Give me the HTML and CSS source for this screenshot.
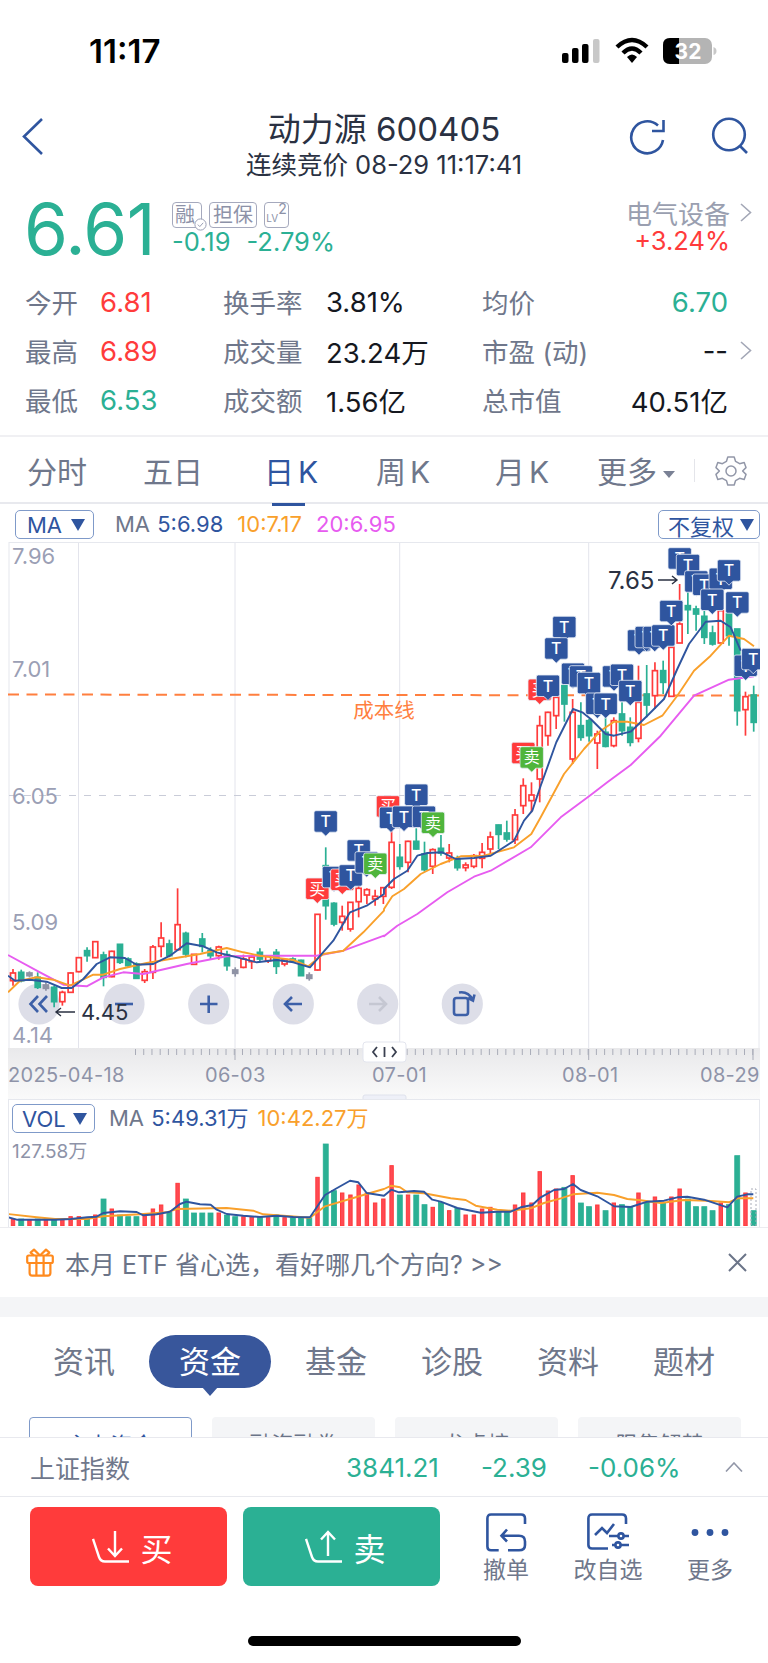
FILE: index.html
```html
<!DOCTYPE html>
<html lang="zh-CN">
<head>
  <meta charset="UTF-8" />
  <meta name="viewport" content="width=device-width, initial-scale=1" />
  <title>动力源 600405</title>
  <link rel="stylesheet" href="styles.css">
</head>
<body>

  <div class="status">
    <span class="time">11:17</span>
    <svg class="status-icons" width="155" height="28" viewBox="562 37 155 28">
      <rect x="562" y="53" width="6.5" height="10" rx="2" fill="#000"/>
      <rect x="572" y="48" width="6.5" height="15" rx="2" fill="#000"/>
      <rect x="582" y="44" width="6.5" height="19" rx="2" fill="#000"/>
      <rect x="593" y="39" width="6.5" height="24" rx="2" fill="#c8c8c8"/>
      <path d="M617 47 Q632 33 647 47" fill="none" stroke="#000" stroke-width="4.4"/>
      <path d="M623 53 Q632 44 641 53" fill="none" stroke="#000" stroke-width="4.4"/>
      <path d="M627 57 Q632 52 637 57 L632 63 Z" fill="#000"/>
      <rect x="663" y="38" width="49" height="26" rx="7" fill="#b4b4b4"/>
      <path d="M670 38 H679 V64 H670 Q663 64 663 57 V45 Q663 38 670 38 Z" fill="#000"/>
      <path d="M713.5 47 Q716.5 48 716.5 51 Q716.5 54 713.5 55 Z" fill="#c8c8c8"/>
      <text class="batt-text" x="688" y="59" text-anchor="middle">32</text>
    </svg>
  </div>

  <div class="nav">
    <svg class="nav-back" width="22" height="38" viewBox="0 0 22 38">
      <polyline points="20,2 2,19.5 20,37" fill="none" stroke="#2f559f" stroke-width="2.6"/>
    </svg>
    <div class="nav-title">
      <div class="nav-name">动力源 600405</div>
      <div class="nav-sub">连续竞价 08-29 11:17:41</div>
    </div>
    <svg class="nav-refresh" width="38" height="38" viewBox="628 117 38 38">
      <path d="M658 125.5 A 16 16 0 1 0 663 140" fill="none" stroke="#2f559f" stroke-width="2.6"/>
      <polyline points="663.5,120 663.5,131 652,131" fill="none" stroke="#2f559f" stroke-width="2.6"/>
    </svg>
    <svg class="nav-search" width="38" height="38" viewBox="711 117 38 38">
      <circle cx="729" cy="134.5" r="15.8" fill="none" stroke="#2f559f" stroke-width="2.6"/>
      <line x1="740" y1="146" x2="747" y2="153" stroke="#2f559f" stroke-width="2.6"/>
    </svg>
  </div>

  <div class="quote">
    <div class="price">6.61</div>
    <div class="quote-meta">
      <div class="badges">
        <span class="badge badge-rong">融
          <svg class="badge-check" width="13" height="13" viewBox="0 0 13 13">
            <circle cx="6.5" cy="6.5" r="5.6" fill="#fff" stroke="#9a9fb5"/>
            <polyline points="3.8,6.6 5.8,8.6 9.2,4.8" fill="none" stroke="#9a9fb5"/>
          </svg>
        </span>
        <span class="badge">担保</span>
        <span class="badge badge-lv"><small>LV</small><sup>2</sup></span>
      </div>
      <div class="changes"><span>-0.19</span><span>-2.79%</span></div>
    </div>
    <div class="sector">
      <div class="sector-name">电气设备
        <svg width="12" height="19" viewBox="0 0 12 19"><polyline points="1,1 10.5,9.5 1,18" fill="none" stroke="#a3a7b6" stroke-width="1.6"/></svg>
      </div>
      <div class="sector-pct">+3.24%</div>
    </div>
  </div>

  <div class="stats">
    <div class="stat"><span class="label l1">今开</span><span class="red">6.81</span></div>
    <div class="stat"><span class="label l2">换手率</span><span class="dark">3.81%</span></div>
    <div class="stat spread"><span class="label">均价</span><span class="green">6.70</span></div>
    <div></div>
    <div class="stat"><span class="label l1">最高</span><span class="red">6.89</span></div>
    <div class="stat"><span class="label l2">成交量</span><span class="dark">23.24万</span></div>
    <div class="stat spread"><span class="label">市盈 (动)</span><span class="dark">--</span></div>
    <svg class="stat-more" width="12" height="19" viewBox="0 0 12 19"><polyline points="1,1 10.5,9.5 1,18" fill="none" stroke="#a3a7b6" stroke-width="1.6"/></svg>
    <div class="stat"><span class="label l1">最低</span><span class="green">6.53</span></div>
    <div class="stat"><span class="label l2">成交额</span><span class="dark">1.56亿</span></div>
    <div class="stat spread"><span class="label">总市值</span><span class="dark">40.51亿</span></div>
    <div></div>
  </div>

  <div class="period-tabs">
    <span class="period p1">分时</span>
    <span class="period p2">五日</span>
    <span class="period p3 active">日<em>K</em></span>
    <span class="period p4">周<em>K</em></span>
    <span class="period p5">月<em>K</em></span>
    <span class="period p6">更多<i class="tri-small"></i></span>
    <span class="period-sep"></span>
    <svg class="gear" width="32" height="32" viewBox="0 0 32 32">
      <path d="M12.8 2 H19.2 L20.6 6.4 L24.6 8.7 L29.2 7.6 L31 12.6 L27.6 16 L31 19.4 L29.2 24.4 L24.6 23.3 L20.6 25.6 L19.2 30 H12.8 L11.4 25.6 L7.4 23.3 L2.8 24.4 L1 19.4 L4.4 16 L1 12.6 L2.8 7.6 L7.4 8.7 L11.4 6.4 Z" fill="none" stroke="#9297a8" stroke-width="1.5" stroke-linejoin="round"/>
      <circle cx="16" cy="16" r="5" fill="none" stroke="#9297a8" stroke-width="1.5"/>
    </svg>
  </div>

  <div class="ma-row">
    <span class="select select-ma">MA<i class="tri"></i></span>
    <span class="ma-text"><b class="grey">MA</b> <b class="blue">5:6.98</b><b class="orange">10:7.17</b><b class="pink">20:6.95</b></span>
    <span class="select select-fq">不复权<i class="tri"></i></span>
  </div>

  <div class="kline">
    <svg id="kline-chart" width="752" height="557" viewBox="8 543 752 557">
      <defs>
        <linearGradient id="axis-bg" x1="0" y1="0" x2="0" y2="1">
          <stop offset="0" stop-color="#e9e9eb"/>
          <stop offset="1" stop-color="#fafafa"/>
        </linearGradient>
      </defs>
      <rect x="9" y="543.5" width="750" height="506" fill="#fff" stroke="#e6e8ee"/>
      <g class="grid">
        <line x1="78.5" y1="544" x2="78.5" y2="1049"/>
        <line x1="235" y1="544" x2="235" y2="1049"/>
        <line x1="399.7" y1="544" x2="399.7" y2="1049"/>
        <line x1="588.7" y1="544" x2="588.7" y2="1049"/>
      </g>
      <line class="dash-grey" x1="9" y1="796.5" x2="759" y2="796.5"/>
      <line class="dash-cost" x1="8" y1="695.5" x2="759" y2="696.5"/>
      <text class="axis-label" x="12" y="565">7.96</text>
      <text class="axis-label" x="12" y="678">7.01</text>
      <text class="axis-label" x="12" y="805">6.05</text>
      <text class="axis-label" x="12" y="931">5.09</text>
      <text class="axis-label" x="12" y="1044">4.14</text>
      <text class="cost-label" x="384" y="719" text-anchor="middle">成本线</text>

      <g class="tools">
        <circle cx="39" cy="1005" r="20.6"/>
        <circle cx="124" cy="1005" r="20.6"/>
        <circle cx="208.7" cy="1005" r="20.6"/>
        <circle cx="293.3" cy="1005" r="20.6"/>
        <circle cx="377.7" cy="1005" r="20.6"/>
        <circle cx="462.3" cy="1005" r="20.6"/>
        <path d="M38 997 L30.5 1005 L38 1013 M47 997 L39.5 1005 L47 1013"/>
        <path d="M115 1005 H133"/>
        <path d="M200 1005 H217.5 M208.7 996.5 V1014"/>
        <path d="M302 1005 H285 M292 998 L285 1005 L292 1012"/>
        <path class="off" d="M369 1005 H386 M379 998 L386 1005 L379 1012"/>
        <rect x="454" y="999" width="14" height="17" rx="2.5"/>
        <path d="M459 993.5 Q468 992 473 1001 M474.5 995.5 L473 1001.5 L468 999"/>
      </g>

      <g id="candles"></g>
      <g id="ma-lines"></g>
      <g id="tags"></g>

      <text class="note" x="608" y="590">7.65</text>
      <path class="note-arrow" d="M658 581 H677 M672 577 L677 581 L672 585"/>
      <text class="note note-low" x="81" y="1021">4.45</text>
      <path class="note-arrow" d="M75 1013 H56 M61 1009 L56 1013 L61 1017"/>

      <rect x="8" y="1049" width="752" height="51" fill="url(#axis-bg)"/>
      <g id="ticks"></g>
      <text class="date" x="8" y="1083">2025-04-18</text>
      <text class="date" x="205" y="1083">06-03</text>
      <text class="date" x="372" y="1083">07-01</text>
      <text class="date" x="562" y="1083">08-01</text>
      <text class="date" x="700" y="1083">08-29</text>

      <rect class="handle" x="363" y="1043" width="43" height="20" rx="3"/>
      <path class="handle-mark" d="M377 1048 L373 1053 L377 1058 M392 1048 L396 1053 L392 1058 M384.5 1048 V1058"/>
      <rect class="handle-low" x="363" y="1096" width="43" height="6" rx="2"/>
    </svg>
  </div>

  <div class="vol">
    <div class="vol-head">
      <span class="select select-vol">VOL<i class="tri"></i></span>
      <span class="ma-text vol-text"><b class="grey">MA</b> <b class="blue">5:49.31万</b><b class="orange">10:42.27万</b></span>
    </div>
    <svg id="vol-chart" width="750" height="92" viewBox="9 1135 750 92">
      <text class="vol-max" x="12" y="1159">127.58万</text>
      <g id="vol-bars"></g>
      <g id="vol-lines"></g>
      <rect class="vol-live" x="751" y="1190" width="5" height="37"/>
    </svg>
  </div>

  <div class="banner">
    <svg class="gift" width="28" height="29" viewBox="0 0 28 29">
      <g fill="none" stroke="#ff8a1e" stroke-width="2.2" stroke-linejoin="round">
        <rect x="1.2" y="7.5" width="25.6" height="7.5" rx="1.5"/>
        <path d="M3.6 15 V25 Q3.6 27.6 6.2 27.6 H21.8 Q24.4 27.6 24.4 25 V15"/>
        <path d="M10.4 7.5 V27.6 M17.6 7.5 V27.6"/>
        <path d="M14 7.5 L8 1.6 L4.6 4.6 L8 7.5 M14 7.5 L20 1.6 L23.4 4.6 L20 7.5"/>
      </g>
    </svg>
    <span class="banner-text">本月 ETF 省心选，看好哪几个方向? &gt;&gt;</span>
    <svg class="banner-close" width="19" height="19" viewBox="0 0 19 19">
      <path d="M1 1 L18 18 M18 1 L1 18" stroke="#6b7488" stroke-width="2"/>
    </svg>
  </div>

  <div class="gap-band"></div>

  <div class="detail">
    <div class="detail-tabs">
      <span class="detail-tab">资讯</span>
      <span class="detail-tab active">资金</span>
      <span class="detail-tab">基金</span>
      <span class="detail-tab">诊股</span>
      <span class="detail-tab">资料</span>
      <span class="detail-tab">题材</span>
    </div>
    <div class="sub-tabs">
      <span class="sub-tab active">主力资金</span>
      <span class="sub-tab">融资融券</span>
      <span class="sub-tab">龙虎榜</span>
      <span class="sub-tab">限售解禁</span>
    </div>
  </div>

  <div class="index-bar">
    <span class="index-name">上证指数</span>
    <span class="index-val v1">3841.21</span>
    <span class="index-val v2">-2.39</span>
    <span class="index-val v3">-0.06%</span>
    <svg width="18" height="10" viewBox="0 0 18 10"><polyline points="1,9.5 9,1 17,9.5" fill="none" stroke="#9297a8" stroke-width="1.6"/></svg>
  </div>

  <div class="action-bar">
    <button class="trade buy">
      <svg width="38" height="34" viewBox="0 0 38 34">
        <path d="M1 9 L7 27 Q8.5 31.5 13 31.5 H37" fill="none" stroke="#fff" stroke-width="2.4"/>
        <path d="M23 1 V26 M16 18.5 L23 26 L30 18.5" fill="none" stroke="#fff" stroke-width="2.4"/>
      </svg>
      买
    </button>
    <button class="trade sell">
      <svg width="38" height="34" viewBox="0 0 38 34">
        <path d="M1 9 L7 27 Q8.5 31.5 13 31.5 H37" fill="none" stroke="#fff" stroke-width="2.4"/>
        <path d="M23 26 V2 M16 9.5 L23 2 L30 9.5" fill="none" stroke="#fff" stroke-width="2.4"/>
      </svg>
      卖
    </button>
    <div class="action">
      <svg width="44" height="40" viewBox="-2 0 44 40">
        <g fill="none" stroke="#2f559f" stroke-width="2.6">
          <path d="M12.7 37.3 H5 Q1.4 37.3 1.4 33.5 V5.5 Q1.4 1.5 5 1.5 H35 Q39 1.5 39 5.5 V11"/>
          <path d="M21 16.5 L15.5 22.8 L21 28.5 M15.5 22.8 H33 Q39 22.8 39 28.5 V32 Q39 37.3 33 37.3 H22"/>
        </g>
      </svg>
      <span>撤单</span>
    </div>
    <div class="action">
      <svg width="44" height="40" viewBox="-1 0 44 40">
        <g fill="none" stroke="#2f559f" stroke-width="2.6">
          <path d="M21 35.5 H5 Q1.4 35.5 1.4 32 V5.5 Q1.4 1.5 5 1.5 H35 Q39 1.5 39 5.5 V11"/>
          <path d="M8 22 L15 15 L20 20 L27 11"/>
          <path d="M22 23 H42 M25 32 H42"/>
          <circle cx="34" cy="23" r="2.6" fill="#fff"/>
          <circle cx="31" cy="32" r="2.6" fill="#fff"/>
        </g>
      </svg>
      <span>改自选</span>
    </div>
    <div class="action">
      <svg width="44" height="40" viewBox="0 0 44 40">
        <g fill="#2f559f">
          <circle cx="7" cy="19.5" r="3.4"/>
          <circle cx="22" cy="19.5" r="3.4"/>
          <circle cx="37" cy="19.5" r="3.4"/>
        </g>
      </svg>
      <span>更多</span>
    </div>
  </div>

  <div class="home"><span class="home-bar"></span></div>

  <script src="chart.js"></script>
</body>
</html>
```

FILE: styles.css
```css
* {
  box-sizing: border-box;
}

html, body {
  margin: 0;
  padding: 0;
}

body {
  width: 768px;
  height: 1663px;
  overflow: hidden;
  background: #fff;
  font-family: Inter, "Noto Sans CJK SC", sans-serif;
  color: #2a3142;
}

svg {
  display: block;
}

/* status bar */
.status {
  height: 102px;
  display: flex;
  align-items: center;
  padding: 0 51px 0 89px;
  justify-content: space-between;
}

.time {
  font-size: 33px;
  font-weight: 600;
  color: #000;
}

.batt-text {
  font-family: Inter, sans-serif;
  font-size: 21px;
  font-weight: 700;
  fill: #fff;
}

/* nav */
.nav {
  height: 78px;
  position: relative;
  text-align: center;
  padding-top: 9px;
}

.nav-name {
  font-size: 33px;
  line-height: 36px;
  color: #2a3142;
}

.nav-sub {
  font-size: 25.5px;
  line-height: 28px;
  margin-top: 4px;
  color: #2a3142;
}

.nav-back,
.nav-refresh,
.nav-search {
  position: absolute;
  top: 15px;
}

.nav-back { left: 22px; }
.nav-refresh { left: 628px; }
.nav-search { left: 711px; }

/* quote */
.quote {
  height: 97px;
  display: flex;
  padding: 16px 16px 0 24px;
}

.price {
  width: 148px;
  font-size: 71px;
  line-height: 66px;
  letter-spacing: -0.5px;
  color: #2bb094;
}

.quote-meta {
  padding-top: 6px;
}

.badges {
  display: flex;
  gap: 7px;
}

.badge {
  position: relative;
  height: 26px;
  line-height: 24px;
  padding: 0 3px;
  border: 1px solid #a5a9bd;
  border-radius: 4px;
  font-size: 20px;
  color: #8d92a8;
}

.badge-rong {
  width: 30px;
  padding: 0 2px;
}

.badge-check {
  position: absolute;
  right: -6px;
  bottom: -4px;
}

.badge-lv {
  width: 25px;
  padding: 0;
  text-align: center;
  white-space: nowrap;
}

.badge-lv small {
  font-size: 10px;
}

.badge-lv sup {
  font-size: 14px;
  line-height: 0;
}

.changes {
  display: flex;
  gap: 16px;
  font-size: 25.5px;
  line-height: 28px;
  color: #2bb094;
}

.sector {
  margin-left: auto;
  padding-top: 1px;
  text-align: right;
}

.sector-name {
  display: flex;
  align-items: center;
  gap: 10px;
  height: 30px;
  font-size: 26px;
  color: #9a9fb0;
}

.sector-pct {
  margin-right: 22px;
  font-size: 25.5px;
  line-height: 28px;
  color: #ff3b3b;
}

/* stats */
.stats {
  height: 160px;
  display: grid;
  grid-template-columns: 198px 259px 246px 40px;
  grid-auto-rows: 49px;
  align-items: center;
  padding-left: 25px;
  border-bottom: 2px solid #f0f0f3;
  font-size: 27.5px;
}

.stat {
  display: flex;
  align-items: center;
}

.spread {
  justify-content: space-between;
}

.stat-more {
  margin-left: 12px;
}

.label {
  font-size: 26.5px;
  color: #6f778b;
}

.l1 { width: 75px; }
.l2 { width: 103px; }

.red { color: #ff3b3b; }
.green { color: #2bb094; }
.dark { color: #15181f; }

/* period tabs */
.period-tabs {
  height: 67px;
  position: relative;
  display: flex;
  align-items: center;
  border-bottom: 2px solid #e8e9ee;
  font-size: 30px;
  color: #6f778b;
}

.period {
  position: absolute;
  top: 15px;
  line-height: 40px;
  white-space: nowrap;
}

.period em {
  margin-left: 4px;
  font-style: normal;
}

.p1 { left: 27px; }
.p2 { left: 143px; }
.p3 { left: 264px; }
.p4 { left: 376px; }
.p5 { left: 495px; }
.p6 { left: 597px; }

.period.active {
  color: #2f559f;
}

.period.active::after {
  content: "";
  position: absolute;
  left: 8px;
  width: 33px;
  bottom: -14px;
  height: 3px;
  background: #2f559f;
}

.tri-small {
  display: inline-block;
  margin-left: 6px;
  vertical-align: 5px;
  border-left: 6px solid transparent;
  border-right: 6px solid transparent;
  border-top: 7px solid #7a8195;
}

.period-sep {
  position: absolute;
  left: 694px;
  top: 22px;
  width: 1px;
  height: 23px;
  background: #e4e5ea;
}

.gear {
  position: absolute;
  left: 715px;
  top: 18px;
}

/* MA row */
.ma-row {
  height: 38px;
  display: flex;
  align-items: flex-start;
  padding: 6px 8px 0 15px;
}

.select {
  display: flex;
  align-items: center;
  justify-content: space-between;
  height: 29px;
  border: 1.5px solid #7f9ac9;
  border-radius: 5px;
  font-size: 22px;
  color: #2f559f;
}

.select-ma {
  width: 79px;
  padding: 0 8px 0 11px;
}

.select-fq {
  width: 102px;
  margin-left: auto;
  padding: 0 5px 0 9px;
}

.select-vol {
  width: 83px;
  padding: 0 7px 0 9px;
}

.tri {
  border-left: 7.5px solid transparent;
  border-right: 7.5px solid transparent;
  border-top: 12px solid #2f559f;
}

.ma-text {
  margin-left: 21px;
  font-size: 22px;
  line-height: 29px;
  white-space: nowrap;
}

.ma-text b {
  font-weight: 400;
  margin-right: 14px;
}

.ma-text .grey { margin-right: 1px; color: #6f778b; }
.blue { color: #2f559f; }
.orange { color: #f9a02b; }
.pink { color: #e75cf0; }

/* kline chart */
.kline {
  margin: 0 8px;
  height: 557px;
}

.grid line {
  stroke: #e3e4ec;
  stroke-width: 1;
}

.dash-grey {
  stroke: #c9ccd8;
  stroke-width: 1.2;
  stroke-dasharray: 7 8;
}

.dash-cost {
  stroke: #ff7f3f;
  stroke-width: 2;
  stroke-dasharray: 11 7.5;
}

.axis-label {
  font-size: 22px;
  fill: #9b9fb5;
}

.cost-label {
  font-family: "Noto Sans CJK SC", sans-serif;
  font-size: 20.5px;
  fill: #ff7f3f;
}

.tools circle {
  fill: #dddee8;
}

.tools path,
.tools rect {
  fill: none;
  stroke: #3d60a8;
  stroke-width: 2.6;
}

.tools path.off {
  stroke: #c5c7d2;
}

.note {
  font-size: 24px;
  fill: #2a3142;
}

.note-low {
  font-size: 22px;
}

.note-arrow {
  fill: none;
  stroke: #2a3142;
  stroke-width: 1.4;
}

.date {
  font-size: 20px;
  letter-spacing: 0.3px;
  fill: #8e93a8;
}

.tick {
  stroke: #a9acb8;
  stroke-width: 1;
}

.handle {
  fill: #fff;
  stroke: #e3e5ee;
}

.handle-mark {
  fill: none;
  stroke: #3a4050;
  stroke-width: 1.8;
}

.handle-low {
  fill: #eef0f8;
  stroke: #dfe2ec;
}

.tag-text {
  font-size: 16px;
  font-weight: 500;
  fill: #fff;
}

.tag-cn {
  font-family: "Noto Sans CJK SC", sans-serif;
  font-weight: 400;
}

/* volume */
.vol {
  margin: 0 8px;
  height: 128px;
  border: 1px solid #e6e8ee;
  border-bottom: 0;
}

.vol-head {
  height: 34px;
  display: flex;
  align-items: flex-start;
  padding: 4px 0 0 3px;
}

.vol-text {
  margin-left: 14px;
}

.vol-text b {
  margin-right: 9px;
}

.vol-max {
  font-size: 19px;
  fill: #8e93a8;
}

.vol-live {
  fill: none;
  stroke: #a9acb8;
  stroke-dasharray: 2 2;
}

/* banner */
.banner {
  height: 70px;
  display: flex;
  align-items: center;
  padding: 0 21px 0 26px;
  border-top: 1px solid #ececf0;
}

.banner-text {
  margin-left: 11px;
  font-size: 25px;
  color: #6b7488;
  white-space: nowrap;
}

.banner-close {
  margin-left: auto;
}

.gap-band {
  height: 20px;
  background: #f4f5f7;
}

/* detail */
.detail {
  height: 120px;
  overflow: hidden;
}

.detail-tabs {
  display: flex;
  height: 100px;
  padding: 18px 0 0 26px;
}

.detail-tab {
  width: 116px;
  height: 53px;
  line-height: 53px;
  text-align: center;
  font-size: 31px;
  color: #6f778b;
}

.detail-tab.active {
  position: relative;
  width: 122px;
  margin: 0 7px;
  border-radius: 27px;
  background: #38569b;
  color: #fff;
}

.detail-tab.active::after {
  content: "";
  position: absolute;
  left: 53px;
  top: 52px;
  border-left: 8px solid transparent;
  border-right: 8px solid transparent;
  border-top: 9px solid #38569b;
}

.sub-tabs {
  display: flex;
  gap: 20px;
  padding-left: 29px;
}

.sub-tab {
  width: 163px;
  height: 54px;
  line-height: 54px;
  text-align: center;
  border-radius: 4px;
  background: #f4f5f7;
  font-size: 22px;
  color: #6b7488;
}

.sub-tab.active {
  background: #fff;
  border: 1.5px solid #7f9ac9;
  color: #2f559f;
}

/* index bar */
.index-bar {
  height: 60px;
  display: flex;
  align-items: center;
  padding-left: 30px;
  border-top: 1px solid #e8e9ee;
  border-bottom: 1px solid #e8e9ee;
}

.index-name {
  width: 316px;
  font-size: 25px;
  color: #6f778b;
}

.index-val {
  font-size: 26px;
  color: #2bb094;
}

.v1 { width: 135px; }
.v2 { width: 107px; }
.v3 { width: 137px; }

/* actions */
.action-bar {
  height: 130px;
  display: flex;
  padding: 10px 0 0 30px;
}

.trade {
  display: flex;
  align-items: center;
  justify-content: center;
  gap: 10px;
  width: 197px;
  height: 79px;
  padding: 0 0 0 8px;
  border: 0;
  border-radius: 8px;
  font-family: "Noto Sans CJK SC", sans-serif;
  font-size: 32px;
  color: #fff;
}

.buy {
  margin-right: 16px;
  background: #ff3b3b;
}

.sell {
  margin-right: 15px;
  background: #2bb094;
}

.action {
  width: 102px;
  display: flex;
  flex-direction: column;
  align-items: center;
  padding-top: 6px;
  font-size: 23px;
  color: #6f778b;
}

.action span {
  margin-top: 1px;
  line-height: 32px;
}

/* home */
.home {
  display: flex;
  justify-content: center;
  padding-top: 9px;
}

.home-bar {
  width: 273px;
  height: 10px;
  border-radius: 5px;
  background: #000;
}
```

FILE: chart.js
```js
const NS = 'http://www.w3.org/2000/svg';
const RED = '#ff3b3b';
const GREEN = '#2bb094';
const GREY = '#8f93a5';

function add(parent, tag, attrs, text) {
  const el = document.createElementNS(NS, tag);
  for (const k in attrs) el.setAttribute(k, attrs[k]);
  if (text) el.textContent = text;
  parent.appendChild(el);
  return el;
}

// Bars sit on a fixed 8.23px step
const barX = i => 13 + 8.23 * i;

// Candles as [wick top, wick bottom, body top, body bottom, colour], in thirds of a px from base
const toY = (base, rows) => rows.map(r => [base + r[0] / 3, base + r[1] / 3, base + r[2] / 3, base + r[3] / 3, r[4]]);

const candles = toY(810, [
  [480, 530, 492, 515, 'r'], [482, 520, 490, 515, 'g'], [487, 505, 492, 500, 'n'], [490, 540, 505, 535, 'g'],
  [520, 545, 528, 538, 'n'], [530, 595, 535, 578, 'g'], [545, 590, 550, 578, 'r'], [490, 550, 492, 550, 'r'],
  [445, 490, 446, 488, 'r'], [415, 458, 425, 440, 'g'], [397, 447, 398, 446, 'r'], [428, 532, 438, 505, 'g'],
  [425, 505, 427, 503, 'r'], [405, 465, 406, 460, 'g'], [445, 475, 450, 470, 'g'], [460, 510, 465, 508, 'g'],
  [480, 522, 488, 514, 'r'], [408, 510, 414, 490, 'r'], [340, 445, 387, 412, 'r'], [392, 445, 405, 440, 'g'],
  [238, 425, 347, 422, 'r'], [368, 445, 373, 435, 'g'], [435, 468, 436, 466, 'r'], [372, 430, 390, 412, 'g'],
  [415, 450, 425, 440, 'g'], [410, 452, 414, 440, 'r'], [425, 485, 437, 470, 'g'], [475, 503, 483, 493, 'n'],
  [437, 478, 450, 475, 'r'], [440, 480, 444, 458, 'r'], [418, 460, 430, 450, 'g'], [438, 462, 442, 455, 'r'],
  [420, 495, 430, 472, 'g'], [450, 472, 452, 465, 'r'], [445, 460, 450, 456, 'g'], [452, 500, 454, 500, 'g'],
  [490, 515, 498, 508, 'n'], [316, 485, 316, 483, 'r'], [115, 332, 170, 290, 'g'], [280, 352, 283, 345, 'g'],
  [290, 365, 322, 340, 'r'], [280, 368, 280, 360, 'r'], [205, 325, 238, 278, 'r'], [238, 285, 242, 258, 'r'],
  [242, 290, 262, 270, 'r'], [235, 285, 236, 262, 'r'],
  [65, 240, 100, 235, 'r'], [105, 182, 145, 172, 'g'], [95, 190, 97, 160, 'r'], [58, 122, 97, 120, 'g'],
  [98, 188, 135, 182, 'g'], [118, 195, 122, 172, 'r'], [78, 140, 118, 132, 'g'], [105, 160, 132, 147, 'r'],
  [140, 185, 152, 176, 'g'], [160, 187, 168, 176, 'r'], [135, 178, 140, 172, 'r'], [102, 178, 130, 148, 'r'],
  [68, 135, 84, 120, 'r'], [47, 120, 48, 76, 'g'], [35, 98, 72, 90, 'g'], [0, 105, 18, 92, 'r'],
]).concat(toY(540, [
  [718, 825, 740, 800, 'r'], [730, 820, 768, 785, 'r'], [530, 790, 560, 720, 'r'], [518, 620, 520, 590, 'r'],
  [475, 570, 475, 530, 'r'], [440, 548, 440, 495, 'g'], [480, 675, 520, 660, 'r'], [490, 605, 560, 595, 'g'],
  [540, 608, 545, 590, 'g'], [575, 690, 585, 612, 'r'], [530, 625, 580, 622, 'g'], [535, 625, 545, 620, 'r'],
  [490, 590, 525, 575, 'g'], [535, 622, 565, 610, 'g'], [380, 610, 490, 598, 'r'], [378, 535, 465, 498, 'g'],
  [370, 510, 395, 470, 'r'], [365, 465, 395, 430, 'g'], [325, 472, 325, 472, 'r'], [135, 312, 255, 312, 'r'],
  [160, 285, 200, 212, 'g'], [200, 275, 210, 225, 'g'], [215, 315, 232, 295, 'g'], [260, 320, 282, 315, 'g'],
  [210, 312, 215, 312, 'r'], [220, 320, 225, 290, 'g'], [270, 560, 270, 515, 'g'], [458, 590, 473, 512, 'r'],
  [440, 578, 468, 550, 'g'],
]));

const candleLayer = document.getElementById('candles');
candles.forEach((c, i) => {
  const x = barX(i);
  const color = c[4] === 'r' ? RED : c[4] === 'g' ? GREEN : GREY;
  add(candleLayer, 'line', { x1: x, x2: x, y1: c[0], y2: c[1], stroke: color, 'stroke-width': 1.7 });
  add(candleLayer, 'rect', {
    x: x - 2.5, y: c[2], width: 5, height: c[3] - c[2],
    fill: c[4] === 'r' ? '#fff' : color, stroke: color, 'stroke-width': 1.7,
  });
});

// Polylines: each segment is [x0, y0, points in thirds of a px]
function linePoints(segments) {
  return segments.map(([x0, y0, pts]) => pts.map(p => (x0 + p[0] / 3).toFixed(1) + ',' + (y0 + p[1] / 3).toFixed(1)).join(' ')).join(' ');
}

function drawLine(layer, color, segments, width) {
  add(layer, 'polyline', { points: linePoints(segments), fill: 'none', stroke: color, 'stroke-width': width, 'stroke-linejoin': 'round' });
}

const maLayer = document.getElementById('ma-lines');
drawLine(maLayer, '#e75cf0', [
  [0, 810, [[24, 438], [120, 490], [190, 527], [260, 532], [310, 505], [370, 490], [430, 495], [560, 465], [680, 442], [800, 440], [950, 440], [1030, 425], [1152, 380]]],
  [384, 810, [[0, 382], [40, 350], [100, 315], [190, 250], [270, 203], [320, 185], [440, 115]]],
  [384, 540, [[530, 835], [620, 768], [670, 730], [740, 678], [830, 590], [930, 470], [1035, 422], [1110, 412]]],
], 1.9);
drawLine(maLayer, '#f9a02b', [
  [0, 810, [[24, 550], [60, 515], [110, 505], [160, 512], [210, 530], [280, 497], [310, 497], [360, 480], [440, 462], [510, 450], [600, 435], [680, 417], [730, 430], [780, 440], [880, 453], [925, 472], [970, 435], [1030, 425], [1090, 370], [1152, 305]]],
  [384, 810, [[0, 300], [25, 262], [60, 240], [110, 195], [170, 165], [230, 142], [300, 140], [390, 115], [442, 75]]],
  [384, 540, [[470, 835], [540, 705], [600, 630], [650, 575], [690, 548], [730, 548], [780, 558], [835, 530], [880, 470], [930, 395], [980, 350], [1035, 290], [1080, 300], [1110, 322]]],
], 1.9);
drawLine(maLayer, '#2f559f', [
  [0, 810, [[24, 500], [45, 515], [90, 512], [140, 518], [185, 537], [215, 537], [250, 510], [290, 465], [330, 445], [375, 447], [410, 467], [460, 465], [510, 440], [560, 403], [610, 412], [650, 430], [700, 442], [770, 460], [830, 453], [880, 460], [930, 475], [1000, 395], [1050, 310], [1100, 290], [1152, 255]]],
  [384, 810, [[0, 240], [30, 210], [70, 185], [100, 140], [130, 132], [175, 130], [215, 150], [270, 147], [320, 140], [390, 95], [420, 35]]],
  [384, 540, [[445, 815], [470, 740], [517, 610], [567, 510], [595, 520], [620, 540], [665, 585], [690, 590], [740, 578], [790, 530], [840, 480], [880, 390], [915, 315], [965, 248], [1010, 245], [1040, 265], [1070, 335]]],
], 1.9);

// Trade tags: [centre x, top y, kind]
const tags = [
  [325.7, 811.7, 'T'], [317.3, 879, '买'], [334, 867.3, 'T'], [342.3, 870, '买'], [350.7, 865.7, 'T'],
  [358.7, 840.7, 'T'], [366.7, 852.7, 'T'], [375.3, 854, '卖'],
  [388, 796.7, '买'], [391, 808, 'T'], [404, 807, 'T'], [416.3, 785, 'T'], [424, 807, 'T'], [433, 813, '卖'],
  [523.3, 743.3, '买'], [531.7, 747.7, '卖'], [539.7, 680, '买'], [548, 676, 'T'],
  [564.3, 617.3, 'T'], [556.3, 638.7, 'T'], [573, 664, 'T'], [581, 666.7, 'T'], [589, 673.3, 'T'],
  [597.3, 694, 'T'], [605.7, 694, 'T'], [614, 666.7, 'T'], [622, 665, 'T'], [630.3, 681.3, 'T'],
  [639, 630.7, 'T'], [646.7, 627.3, 'T'], [654.7, 627.3, 'T'], [663.3, 625.7, 'T'], [671.3, 601.3, 'T'],
  [679.7, 548.7, 'T'], [688, 555.3, 'T'], [696.3, 571.7, 'T'], [704.3, 575, 'T'], [720.7, 569, 'T'],
  [729, 560.7, 'T'], [712.3, 590, 'T'], [737.3, 592.7, 'T'], [745.7, 656, 'T'], [753.3, 649.3, 'T'],
];
const TAG_FILL = { T: '#2f559f', '买': '#ff3b3b', '卖': '#4fb53c' };

const tagLayer = document.getElementById('tags');
tags.forEach(([x, t, kind]) => {
  const l = x - 11.7, r = x + 11.7, b = t + 21.5;
  const d = `M${l} ${t + 2}Q${l} ${t} ${l + 2} ${t}H${r - 2}Q${r} ${t} ${r} ${t + 2}V${b - 2}Q${r} ${b} ${r - 2} ${b}H${x + 4}L${x} ${b + 4}L${x - 4} ${b}H${l + 2}Q${l} ${b} ${l} ${b - 2}Z`;
  add(tagLayer, 'path', { d, fill: TAG_FILL[kind], stroke: '#e8edf6', 'stroke-width': 0.8 });
  add(tagLayer, 'text', { x, y: t + 16.5, 'text-anchor': 'middle', class: kind === 'T' ? 'tag-text' : 'tag-text tag-cn' }, kind);
});

// Axis ticks
const ticks = document.getElementById('ticks');
for (let x = 135.5; x < 757; x += 8.23) {
  add(ticks, 'line', { class: 'tick', x1: x, x2: x, y1: 1050, y2: 1056 });
}
[235, 588.7, 753].forEach(x => add(ticks, 'line', { class: 'tick', x1: x, x2: x, y1: 1050, y2: 1061 }));

// Volume bars: top of each bar in thirds of a px from 1090
const volTops = [390, 390, 392, 390, 392, 392, 392, 383, 383, 390, 378, 330, 360, 378, 383, 383, 380, 360, 348, 370, 283, 330, 372, 372, 372, 372, 378, 383, 383, 383, 383, 386, 378, 386, 386, 386, 386, 265, 165, 305, 312, 318, 288, 312, 342, 330,
  230, 318, 318, 318, 347, 355, 340, 365, 358, 378, 378, 360, 355, 368, 368, 348, 312, 342, 248, 306, 300, 295, 260, 342, 353, 348, 365, 342, 347, 353, 312, 340, 324, 342, 324, 300, 330, 353, 353, 365, 342, 347, 200, 312, 365];
const volReds = [0, 2, 4, 6, 7, 8, 10, 12, 16, 17, 18, 20, 25, 28, 29, 31, 33, 37, 40, 41, 42, 43, 44, 45, 46, 48, 51, 53, 55, 56, 57, 58, 61, 62, 63, 64, 65, 66, 68, 71, 73, 76, 78, 80, 81, 86, 89];

const volBars = document.getElementById('vol-bars');
volTops.forEach((top, i) => {
  const isRed = volReds.includes(i);
  const y = 1090 + top / 3;
  const w = isRed ? 3.4 : 5;
  add(volBars, 'rect', {
    x: barX(i) - w / 2, y, width: w, height: 1227 - y,
    fill: isRed ? '#ff4a54' : GREEN, stroke: isRed ? RED : GREEN, 'stroke-width': isRed ? 1 : 0.8,
  });
});

const volLines = document.getElementById('vol-lines');
drawLine(volLines, '#f9a02b', [
  [0, 1090, [[24, 375], [110, 385], [165, 390], [260, 390], [310, 382], [420, 376], [500, 370], [530, 360], [640, 358], [680, 357], [760, 365], [790, 376], [860, 381], [930, 386], [975, 352], [1100, 315]]],
  [384, 1090, [[0, 300], [22, 290], [48, 295], [70, 310], [120, 313], [200, 328], [245, 333], [275, 350], [340, 362], [380, 365], [440, 358], [480, 342], [530, 328], [567, 316], [640, 311], [690, 318], [730, 330], [770, 334], [830, 342], [900, 333], [970, 335], [1035, 340], [1060, 328], [1108, 328]]],
], 1.9);
drawLine(volLines, '#2f559f', [
  [0, 1090, [[24, 385], [50, 392], [110, 392], [165, 392], [212, 390], [262, 385], [290, 383], [310, 372], [360, 367], [410, 369], [430, 379], [470, 376], [510, 368], [540, 345], [560, 338], [600, 346], [632, 347], [650, 362], [680, 375], [730, 380], [780, 384], [830, 380], [880, 384], [930, 385], [975, 318], [1010, 298], [1050, 275], [1075, 280], [1100, 312]]],
  [384, 1090, [[0, 320], [22, 302], [45, 310], [90, 306], [120, 308], [145, 332], [170, 338], [220, 357], [290, 371], [340, 368], [380, 368], [410, 355], [445, 348], [470, 325], [510, 303], [540, 300], [567, 285], [590, 303], [640, 322], [690, 352], [740, 354], [790, 338], [840, 335], [880, 325], [910, 323], [960, 332], [1030, 355], [1060, 323], [1090, 316], [1108, 316]]],
], 1.9);
```
